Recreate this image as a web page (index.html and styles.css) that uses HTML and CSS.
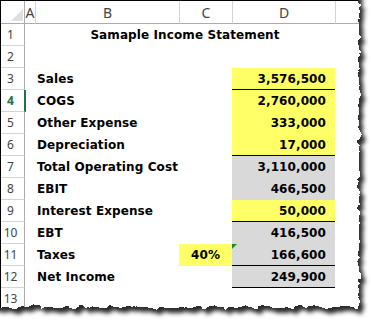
FILE: index.html
```html
<!DOCTYPE html>
<html>
<head>
<meta charset="utf-8">
<link rel="stylesheet" href="styles.css">
</head>
<body>
<div class="page">
  <div class="sheet">
    <div class="corner"><span class="tri"></span></div>
    <div class="ch">A</div>
    <div class="ch sep">B</div>
    <div class="ch sep">C</div>
    <div class="ch sep">D</div>
    <div class="ch sep"></div>

    <div class="rh">1</div>
    <div class="cell title">Samaple Income Statement</div>

    <div class="rh">2</div>

    <div class="rh">3</div>
    <div class="cell b">Sales</div>
    <div class="cell d num y bb">3,576,500</div>

    <div class="rh sel">4</div>
    <div class="cell b">COGS</div>
    <div class="cell d num y">2,760,000</div>

    <div class="rh">5</div>
    <div class="cell b">Other Expense</div>
    <div class="cell d num y">333,000</div>

    <div class="rh">6</div>
    <div class="cell b">Depreciation</div>
    <div class="cell d num y bb">17,000</div>

    <div class="rh">7</div>
    <div class="cell b">Total Operating Cost</div>
    <div class="cell d num g">3,110,000</div>

    <div class="rh">8</div>
    <div class="cell b">EBIT</div>
    <div class="cell d num g">466,500</div>

    <div class="rh">9</div>
    <div class="cell b">Interest Expense</div>
    <div class="cell d num y bb">50,000</div>

    <div class="rh">10</div>
    <div class="cell b">EBT</div>
    <div class="cell d num g">416,500</div>

    <div class="rh">11</div>
    <div class="cell b">Taxes</div>
    <div class="cell c pct y">40%</div>
    <div class="cell d num g bb err">166,600</div>

    <div class="rh">12</div>
    <div class="cell b">Net Income</div>
    <div class="cell d num g bb">249,900</div>

    <div class="rh">13</div>
  </div>
  <svg class="tear" width="371" height="320" viewBox="0 0 371 320" aria-hidden="true">
    <defs>
      <filter id="rough" filterUnits="userSpaceOnUse" x="-60" y="-60" width="500" height="440">
        <feTurbulence type="fractalNoise" baseFrequency="0.1" numOctaves="4" seed="7" result="noise"/>
        <feDisplacementMap in="SourceGraphic" in2="noise" scale="9" xChannelSelector="R" yChannelSelector="G"/>
      </filter>
      <filter id="roughShadow" filterUnits="userSpaceOnUse" x="-60" y="-60" width="500" height="440">
        <feTurbulence type="fractalNoise" baseFrequency="0.1" numOctaves="4" seed="7" result="noise"/>
        <feDisplacementMap in="SourceGraphic" in2="noise" scale="9" xChannelSelector="R" yChannelSelector="G" result="d"/>
        <feOffset in="d" dx="4" dy="5" result="o"/>
        <feGaussianBlur in="o" stdDeviation="2"/>
      </filter>
      <mask id="outside" maskUnits="userSpaceOnUse" x="0" y="0" width="371" height="320">
        <rect width="371" height="320" fill="#fff"/>
        <rect x="-30" y="-30" width="389" height="337" fill="#000" filter="url(#rough)"/>
      </mask>
    </defs>
    <g mask="url(#outside)">
      <rect width="371" height="320" fill="#fff"/>
      <rect x="-30" y="-30" width="389" height="337" fill="#2a2a2a" filter="url(#roughShadow)"/>
    </g>
  </svg>
</div>
</body>
</html>
```

FILE: styles.css
```css
html, body {
  margin: 0;
  padding: 0;
  background: #fff;
}

.page {
  position: relative;
  width: 371px;
  height: 320px;
  overflow: hidden;
}

.sheet {
  display: grid;
  grid-template-columns: 24px 10px 144px 53px 103px 1fr;
  grid-template-rows: 23px;
  grid-auto-rows: 22px;
  width: 371px;
  height: 320px;
  box-sizing: border-box;
  border-top: 1px solid #000;
  border-left: 1px solid #000;
  background: #fff;
  overflow: hidden;
}

.sheet > div {
  box-sizing: border-box;
}

.corner {
  grid-column: 1;
  position: relative;
  border-right: 1px solid #ababab;
  border-bottom: 1px solid #ababab;
}

.tri {
  position: absolute;
  right: 1px;
  bottom: 2px;
  width: 0;
  height: 0;
  border-left: 12px solid transparent;
  border-bottom: 12px solid #dfdfdf;
}

.ch {
  border-bottom: 1px solid #ababab;
  font: 14px "Noto Sans", sans-serif;
  color: #444;
  text-align: center;
  line-height: 22px;
  padding-top: 1px;
  overflow: hidden;
}

.ch.sep {
  border-left: 1px solid #d4d4d4;
}

.rh {
  grid-column: 1;
  border-right: 1px solid #ababab;
  border-bottom: 1px solid #d4d4d4;
  font: 12px "Noto Sans", sans-serif;
  color: #444;
  text-align: center;
  line-height: 21px;
  padding-right: 4px;
}

.rh.sel {
  color: #217346;
  font-weight: bold;
  border-right-color: #217346;
  box-shadow: 1px 0 0 #217346;
}

.cell {
  font: bold 12px "DejaVu Sans", sans-serif;
  letter-spacing: 0.1px;
  color: #000;
  line-height: 20px;
  padding-top: 1px;
  border-bottom: 1px solid transparent;
  white-space: nowrap;
}

.title {
  grid-column: 3 / span 3;
  text-align: center;
}

.b {
  grid-column: 3;
  padding-left: 2px;
}

.c {
  grid-column: 4;
}

.d {
  grid-column: 5;
  position: relative;
}

.num {
  text-align: right;
  padding-right: 9px;
}

.pct {
  text-align: center;
}

.y {
  background: #ffff66;
}

.g {
  background: #d9d9d9;
}

.bb {
  border-bottom-color: #000;
}

.err::before {
  content: "";
  position: absolute;
  left: 0;
  top: 0;
  width: 0;
  height: 0;
  border-top: 5px solid #1e8a3c;
  border-right: 5px solid transparent;
}

.tear {
  position: absolute;
  left: 0;
  top: 0;
  pointer-events: none;
}
```
